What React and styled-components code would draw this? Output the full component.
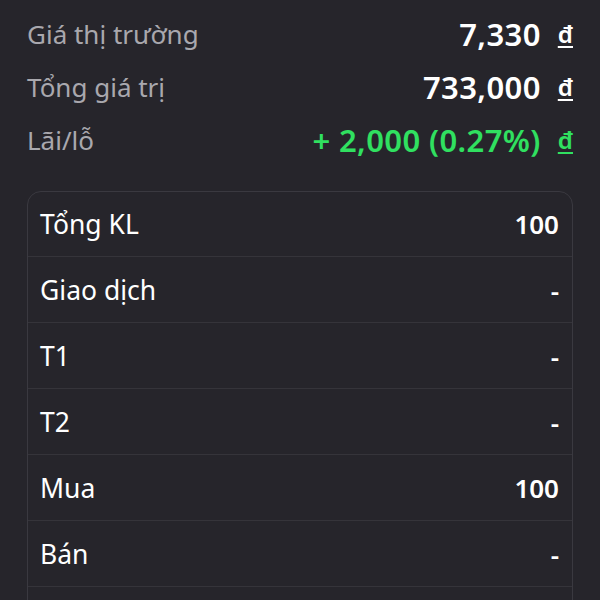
import React from "react";
import styled, { createGlobalStyle } from "styled-components";

const Global = createGlobalStyle`
  html, body { margin: 0; padding: 0; background: #26252b; }
  body { font-family: "Noto Sans", "Open Sans", sans-serif; }
`;

const Page = styled.div`
  width: 600px;
  height: 600px;
  overflow: hidden;
  background: #26252b;
  padding: 7px 27px 0 27px;
  box-sizing: border-box;
`;

const Summary = styled.div`
  display: flex;
  flex-direction: column;
`;

const SumRow = styled.div`
  display: flex;
  align-items: center;
  justify-content: space-between;
  height: 53px;
`;

const SumLabel = styled.span`
  color: #a9a8ae;
  font-size: 26px;
`;

const SumValue = styled.span`
  display: flex;
  align-items: center;
  gap: 17px;
  color: ${(p) => (p.$up ? "#30e060" : "#ffffff")};
  font-size: 31px;
  font-weight: 600;
  letter-spacing: 0.4px;
`;

const Currency = styled.span`
  font-size: 24px;
  font-weight: 600;
  letter-spacing: 0;
  text-decoration: underline;
  text-decoration-thickness: 2px;
  text-underline-offset: 3px;
`;

const Card = styled.div`
  margin-top: 25px;
  border: 1px solid #3a3940;
  border-radius: 14px;
  overflow: hidden;
`;

const Row = styled.div`
  display: flex;
  align-items: center;
  justify-content: space-between;
  padding: 0 13px 0 12px;
  border-top: ${(p) => (p.$first ? "none" : "1px solid #35343a")};
  box-sizing: border-box;
  height: ${(p) => (p.$first ? "64px" : "66px")};
`;

const Label = styled.span`
  color: #ffffff;
  font-size: 26.5px;
`;

const Value = styled.span`
  color: #ffffff;
  font-size: 26px;
  font-weight: 600;
`;

const rows = [
  ["Tổng KL", "100"],
  ["Giao dịch", "-"],
  ["T1", "-"],
  ["T2", "-"],
  ["Mua", "100"],
  ["Bán", "-"],
  ["Khác", "-"],
];

export default function App() {
  return (
    <>
      <Global />
      <Page>
        <Summary>
          <SumRow>
            <SumLabel>Giá thị trường</SumLabel>
            <SumValue>
              7,330 <Currency>đ</Currency>
            </SumValue>
          </SumRow>
          <SumRow>
            <SumLabel>Tổng giá trị</SumLabel>
            <SumValue>
              733,000 <Currency>đ</Currency>
            </SumValue>
          </SumRow>
          <SumRow>
            <SumLabel>Lãi/lỗ</SumLabel>
            <SumValue $up>
              + 2,000 (0.27%) <Currency>đ</Currency>
            </SumValue>
          </SumRow>
        </Summary>
        <Card>
          {rows.map(([l, v], i) => (
            <Row key={l} $first={i === 0}>
              <Label>{l}</Label>
              <Value>{v}</Value>
            </Row>
          ))}
        </Card>
      </Page>
    </>
  );
}
